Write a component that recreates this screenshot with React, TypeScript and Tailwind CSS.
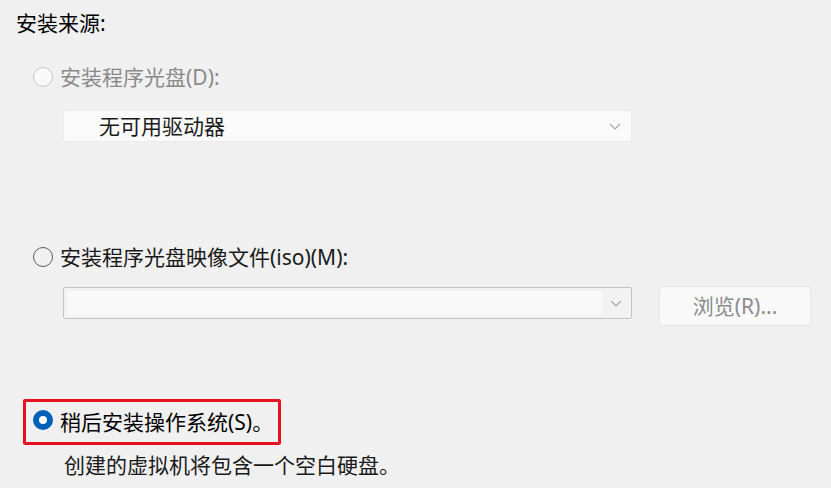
import React from "react";

const Chevron = () => (
  <svg width="12" height="7" viewBox="0 0 12 7" className="shrink-0">
    <path d="M1 1 L6 6 L11 1" fill="none" stroke="#a6a6a6" strokeWidth="1.2" />
  </svg>
);

export default function App() {
  return (
    <div
      className="w-[831px] h-[488px] bg-[#f0f0f0] overflow-hidden pl-[16px] text-[21px] leading-[28px] text-[#1a1a1a]"
      style={{ fontFamily: '"Noto Sans", "Noto Sans CJK SC", sans-serif' }}
    >
      <div className="mt-[9px] text-black">安装来源:</div>

      {/* Option 1 - disabled */}
      <div className="mt-[26px] ml-[17px] flex items-center gap-[7px] h-[28px]">
        <div className="w-[20px] h-[20px] rounded-full border border-[#c6c6c6] bg-[#f9f9f9]" />
        <span className="text-[#8a8a8a]">安装程序光盘(D):</span>
      </div>
      <div className="mt-[19px] ml-[47px] w-[569px] h-[32px] bg-[#fafafa] border border-[#ebebeb] rounded-[2px] flex items-center pl-[35px] pr-[10px]">
        <span className="flex-1">无可用驱动器</span>
        <Chevron />
      </div>

      {/* Option 2 */}
      <div className="mt-[101px] ml-[17px] flex items-center gap-[7px] h-[28px]">
        <div className="w-[20px] h-[20px] rounded-full border border-[#5a5a5a]" />
        <span>安装程序光盘映像文件(iso)(M):</span>
      </div>
      <div className="mt-[15px] flex items-start">
        <div className="mt-[1px] ml-[47px] w-[569px] h-[32px] border border-[#c4c4c4] rounded-[2px] bg-[#f2f2f2] flex items-center p-[3px] pr-[9px]">
          <div className="flex-1 h-full bg-[#f9f9f9] mr-[8px]" />
          <Chevron />
        </div>
        <div className="ml-[27px] w-[152px] h-[40px] rounded-[4px] border border-[#e6e6e6] bg-[#f9f9f9] flex items-center justify-center text-[#8c8c8c]">
          浏览(R)...
        </div>
      </div>

      {/* Option 3 - selected */}
      <div className="mt-[73px] ml-[7px] w-[258px] h-[46px] border-[3px] border-[#e81123] rounded-[2px] flex items-center pl-[7px] gap-[7px]">
        <div className="-mt-[4px] w-[20px] h-[20px] rounded-full bg-[#005fb8] flex items-center justify-center">
          <div className="w-[8px] h-[8px] rounded-full bg-white" />
        </div>
        <span className="text-black">稍后安装操作系统(S)。</span>
      </div>
      <div className="mt-[6px] ml-[48px]">创建的虚拟机将包含一个空白硬盘。</div>
    </div>
  );
}
